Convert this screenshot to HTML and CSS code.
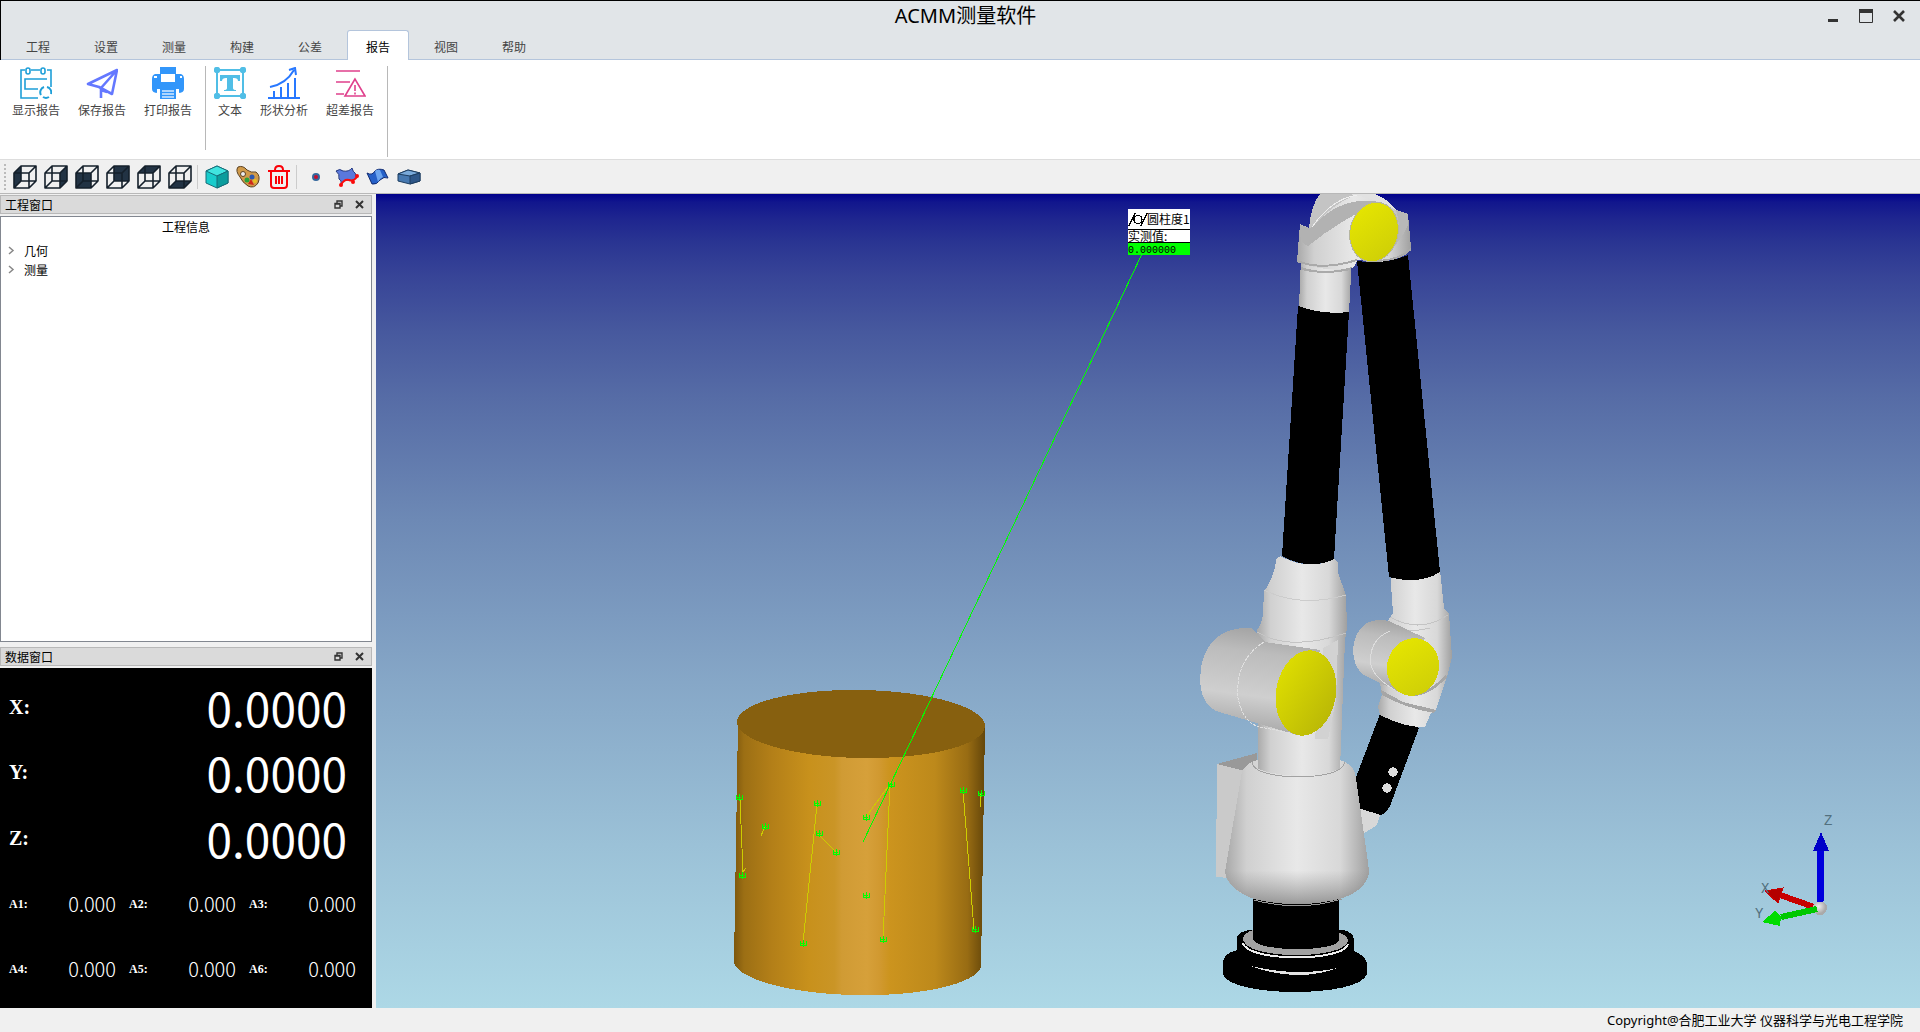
FILE: index.html
```html
<!DOCTYPE html>
<html lang="zh-CN">
<head>
<meta charset="utf-8">
<title>ACMM测量软件</title>
<link rel="stylesheet" href="styles.css">
</head>
<body>
<svg class="defs" width="0" height="0" aria-hidden="true">
  <defs>
    <g id="wire" fill="none" stroke="#15202b" stroke-width="1.6" stroke-linejoin="round">
      <path d="M1 8H16V23H1ZM8 1H23V16H8ZM1 8L8 1M16 8L23 1M16 23L23 16M1 23L8 16"/>
    </g>
    <g id="restore" fill="none" stroke="#333" stroke-width="1.4">
      <path d="M3 3V1H8V6H6M1 3.5H6V8H1ZM1 4H6"/>
    </g>
    <g id="cross" fill="none" stroke="#333" stroke-width="2"><path d="M1 1L8 8M8 1L1 8"/></g>
  </defs>
</svg>

<header class="titlebar">
  <h1 class="title">ACMM测量软件</h1>
  <div class="window-buttons">
    <button aria-label="最小化"><svg width="14" height="14"><path d="M2 11.5H12" stroke="#333" stroke-width="3"/></svg></button>
    <button aria-label="最大化"><svg width="14" height="14"><path d="M.5 1H13.500V13.500H.5Z" fill="none" stroke="#333"/><path d="M0 2H14" stroke="#333" stroke-width="4"/></svg></button>
    <button aria-label="关闭"><svg width="14" height="14"><path d="M2 2L12 12M12 2L2 12" stroke="#333" stroke-width="2.6"/></svg></button>
  </div>
  <nav class="tabs">
    <button class="tab">工程</button>
    <button class="tab">设置</button>
    <button class="tab">测量</button>
    <button class="tab">构建</button>
    <button class="tab">公差</button>
    <button class="tab active">报告</button>
    <button class="tab">视图</button>
    <button class="tab">帮助</button>
  </nav>
</header>

<section class="ribbon">
  <div class="group">
    <button class="tool"><svg width="32" height="32" viewBox="0 0 32 32" fill="none" stroke="#1e9fd8" stroke-width="1.6"><path d="M5 3H1V31H18M11 3H20M27 3H31V20M27 12H5V22H18"/><rect x="6" y="1" width="4" height="6" rx="2"/><rect x="21" y="1" width="4" height="6" rx="2"/><path d="M21 28A5.500 5.500 0 0 1 24 20M27 20A5.500 5.500 0 0 1 31 27M29 30A5.500 5.500 0 0 1 23 30" stroke-width="2"/></svg>显示报告</button>
    <button class="tool"><svg width="32" height="32" viewBox="0 0 32 32" fill="none" stroke="#6478ff" stroke-width="2.6" stroke-linejoin="round"><path d="M31 3L2 17L13 20L26 27ZM31 3L15 21V31M15 23L21 25"/></svg>保存报告</button>
    <button class="tool"><svg width="32" height="32" viewBox="0 0 32 32" fill="#3296fa"><path d="M8 0H24V7H29Q32 8 32 12V22Q32 26 26 26V22H6V26Q0 26 0 22V12Q0 8 3 7H8Z"/><path d="M9 7H23V15H9ZM2 9H5V11H2ZM28 9H30V11H28Z" fill="#fff"/><path d="M8 22H24V32H8Z"/><path d="M6 22V27M26 22V27" stroke="#fff" stroke-width="2"/><path d="M10 24H22M10 27H22M10 30H22" stroke="#d6eaff" stroke-width="1.4"/></svg>打印报告</button>
  </div>
  <div class="group">
    <button class="tool"><svg width="32" height="32" viewBox="0 0 32 32" fill="#50bee6"><path d="M3 3H29V29H3Z" fill="none" stroke="#50bee6" stroke-width="2"/><circle cx="3" cy="3" r="3.2"/><circle cx="29" cy="3" r="3.2"/><circle cx="3" cy="29" r="3.2"/><circle cx="29" cy="29" r="3.2"/><path d="M6 8H26V14H24Q24 11 20 11H19V21Q19 23 22 23V24H10V23Q13 23 13 21V11H12Q8 11 8 14H6Z"/></svg>文本</button>
    <button class="tool"><svg width="32" height="32" viewBox="0 0 32 32" fill="none" stroke="#2878ff" stroke-width="2"><path d="M0 31H32M6 30V24M13 30V20M20 30V16M27 30V11M2 20Q18 17 26 3M21 3L27 1L28 8"/></svg>形状分析</button>
    <button class="tool"><svg width="32" height="32" viewBox="0 0 32 32" fill="none" stroke="#e0408c" stroke-width="1.6"><path d="M2 4H26M2 15H16M2 27H10M21 12L11 29H31ZM21 18V24M21 25.5V27.5"/></svg>超差报告</button>
  </div>
</section>

<section class="toolbar">
  <span class="grip"></span>
  <button aria-label="左视图"><svg width="24" height="24"><path d="M1 8L8 1V16L1 23Z" fill="#223344"/><use href="#wire"/></svg></button>
  <button aria-label="右视图"><svg width="24" height="24"><path d="M16 8L23 1V16L16 23Z" fill="#223344"/><use href="#wire"/></svg></button>
  <button aria-label="前视图"><svg width="24" height="24"><path d="M1 8H16V23H1Z" fill="#223344"/><use href="#wire"/></svg></button>
  <button aria-label="后视图"><svg width="24" height="24"><path d="M8 1H23V16H8Z" fill="#223344"/><use href="#wire"/></svg></button>
  <button aria-label="俯视图"><svg width="24" height="24"><path d="M1 8L8 1H23L16 8Z" fill="#223344"/><use href="#wire"/></svg></button>
  <button aria-label="仰视图"><svg width="24" height="24"><path d="M1 23L8 16H23L16 23Z" fill="#223344"/><use href="#wire"/></svg></button>
  <span class="divider"></span>
  <button aria-label="实体"><svg width="24" height="24" stroke="#176c78" stroke-width="1"><path d="M12 1L23 6V18L12 23L1 18V6Z" fill="#18cccc"/><path d="M12 1L23 6L12 11L1 6Z" fill="#40e4e0"/><path d="M12 11L23 6V18L12 23Z" fill="#0b9d9d"/></svg></button>
  <button aria-label="颜色"><svg width="24" height="24"><path d="M2 2Q7 0 11 5Q15 8 20 7Q25 11 22 18Q18 24 12 21Q6 17 4 12Q-1 6 2 2Z" fill="#d09a4a" stroke="#5a4020"/><circle cx="7" cy="9" r="2.5" fill="#eee" stroke="#5a4020"/><circle cx="16" cy="12" r="2.5" fill="#2b57b0"/><circle cx="11" cy="15" r="2.5" fill="#28a03c"/><circle cx="19" cy="16" r="2" fill="#e8c020"/><path d="M12 19L15 14L18 20Z" fill="#d02818"/></svg></button>
  <button aria-label="删除"><svg width="24" height="24" fill="none" stroke="#fb0007" stroke-width="2"><path d="M1 6H23M8 5Q8 1 12 1Q16 1 16 5M4 6V20Q4 23 7 23H17Q20 23 20 20V6M9 11V19M12 11V19M15 11V19"/></svg></button>
  <span class="divider"></span>
  <button aria-label="点"><svg width="24" height="24"><circle cx="12" cy="12" r="3" fill="#c8102e" stroke="#35689c" stroke-width="2"/></svg></button>
  <button aria-label="曲线"><svg width="24" height="24"><path d="M1 6Q5 3 8 6Q14 7 17 3Q18 7 20 8L22 12Q18 17 14 15Q9 14 6 19Q7 15 4 14Q5 9 1 6Z" fill="#5a78dc" stroke="#23377d"/><path d="M22 12Q18 17 14 15Q9 14 6 20" fill="none" stroke="#fa0a0a" stroke-width="2"/><circle cx="22" cy="11" r="2" fill="#fa0a0a"/><circle cx="6" cy="20" r="2" fill="#fa0a0a"/><circle cx="18" cy="17" r="2" fill="#fa0a0a"/></svg></button>
  <button aria-label="曲面"><svg width="24" height="24" stroke="#102a70"><path d="M1 8Q6 11 9 6Q12 3 18 5L22 13Q18 11 14 15Q11 20 6 19Z" fill="#2560c8"/><path d="M9 6Q11 4 14 5L17 12Q14 13 12 17Z" fill="#6ba4ee" stroke="none"/></svg></button>
  <button aria-label="方块"><svg width="24" height="24" stroke="#1d3d60"><path d="M1 9L11 5L23 8V16L13 19L1 16Z" fill="#4678b0"/><path d="M1 9L11 5L23 8L13 11Z" fill="#78a8d8"/><path d="M13 11L23 8V16L13 19Z" fill="#2e5688"/></svg></button>
</section>

<main class="workspace">
  <aside class="side">
    <div class="dock-title"><h2>工程窗口</h2>
      <button aria-label="浮动"><svg width="9" height="9"><use href="#restore"/></svg></button>
      <button aria-label="关闭"><svg width="9" height="9"><use href="#cross"/></svg></button>
    </div>
    <div class="tree">
      <h3>工程信息</h3>
      <ul>
        <li><svg width="7" height="9"><path d="M1 1L5 4.500L1 8" fill="none" stroke="#888" stroke-width="1.5"/></svg>几何</li>
        <li><svg width="7" height="9"><path d="M1 1L5 4.500L1 8" fill="none" stroke="#888" stroke-width="1.5"/></svg>测量</li>
      </ul>
    </div>
    <div class="dock-title lower"><h2>数据窗口</h2>
      <button aria-label="浮动"><svg width="9" height="9"><use href="#restore"/></svg></button>
      <button aria-label="关闭"><svg width="9" height="9"><use href="#cross"/></svg></button>
    </div>
    <div class="readout">
      <div class="axis"><span>X:</span><output>0.0000</output></div>
      <div class="axis"><span>Y:</span><output>0.0000</output></div>
      <div class="axis"><span>Z:</span><output>0.0000</output></div>
      <div class="angle"><span>A1:</span><output>0.000</output></div>
      <div class="angle"><span>A2:</span><output>0.000</output></div>
      <div class="angle"><span>A3:</span><output>0.000</output></div>
      <div class="angle"><span>A4:</span><output>0.000</output></div>
      <div class="angle"><span>A5:</span><output>0.000</output></div>
      <div class="angle"><span>A6:</span><output>0.000</output></div>
    </div>
  </aside>

  <section class="viewport">
    <svg class="scene" viewBox="376 194 1544 814" preserveAspectRatio="xMidYMid slice">
      <defs>
        <linearGradient id="gold"><stop offset="0" stop-color="#7d570d"/><stop offset=".04" stop-color="#9c6f14"/><stop offset=".15" stop-color="#b37f18"/><stop offset=".3" stop-color="#c8911c"/><stop offset=".4" stop-color="#ca9526"/><stop offset=".43" stop-color="#d09b34"/><stop offset=".53" stop-color="#d6a03a"/><stop offset=".58" stop-color="#d19930"/><stop offset=".62" stop-color="#cc941e"/><stop offset=".8" stop-color="#bd891b"/><stop offset=".93" stop-color="#986c13"/><stop offset="1" stop-color="#64460a"/></linearGradient>
        <linearGradient id="shell"><stop offset="0" stop-color="#a8a8a8"/><stop offset=".15" stop-color="#d0d0d0"/><stop offset=".5" stop-color="#e8e8e8"/><stop offset=".8" stop-color="#d8d8d8"/><stop offset="1" stop-color="#a0a0a0"/></linearGradient>
        <linearGradient id="barrel" x1=".3" y1="0" x2=".15" y2="1"><stop offset="0" stop-color="#a6a6a6"/><stop offset=".2" stop-color="#bcbcbc"/><stop offset=".6" stop-color="#cfcfcf"/><stop offset="1" stop-color="#a0a0a0"/></linearGradient>
        <linearGradient id="cap" x2="1" y2=".6"><stop offset="0" stop-color="#e2e200"/><stop offset="1" stop-color="#bcba06"/></linearGradient>
        <linearGradient id="capLight" x2="1" y2="1"><stop offset="0" stop-color="#e8e800"/><stop offset="1" stop-color="#cccc08"/></linearGradient>
        <linearGradient id="under" x2="0" y2="1"><stop offset=".6" stop-color="#888" stop-opacity="0"/><stop offset="1" stop-color="#777" stop-opacity=".7"/></linearGradient>
        <radialGradient id="ball" cx=".4" cy=".4"><stop offset="0" stop-color="#eee"/><stop offset="1" stop-color="#aaa"/></radialGradient>
        <g id="mark" fill="none" stroke="#0f0"><path d="M-3 -2V2H3V-2M-2 0H2M0 -3V4"/></g>
      </defs>

      <!-- workpiece -->
      <path d="M738 722L734 963A124 33 1 0 0 981 967L985 726Z" fill="url(#gold)"/>
      <ellipse cx="861" cy="724" rx="124" ry="34" transform="rotate(1 861 724)" fill="#87600f"/>
      <path d="M740 800L743 872M765 826L761 836M817 804L803 943M818 834L836 852M866 817L890 784L883 939M963 790L974 930M980 793V807M743 872L746 868" stroke="#cdcd00" fill="none"/>
      <path d="M1142 254L863 842" stroke="#0f0"/>
      <use href="#mark" x="739" y="797"/><use href="#mark" x="742" y="875"/><use href="#mark" x="765" y="826"/><use href="#mark" x="817" y="803"/><use href="#mark" x="819" y="833"/><use href="#mark" x="836" y="852"/><use href="#mark" x="866" y="817"/><use href="#mark" x="891" y="784"/><use href="#mark" x="866" y="895"/><use href="#mark" x="803" y="943"/><use href="#mark" x="883" y="939"/><use href="#mark" x="963" y="790"/><use href="#mark" x="975" y="929"/><use href="#mark" x="981" y="793"/>

      <!-- elbow at the top of the arm -->
      <path d="M1301 258H1352L1349 312Q1325 316 1299 307Z" fill="url(#shell)"/>
      <path d="M1300 224L1309 228Q1311 205 1320 194H1375Q1388 199 1396 210L1408 214L1411 248Q1409 258 1380 262L1357 260Q1355 268 1351 268Q1325 273 1297 261Z" fill="url(#shell)"/>
      <path d="M1300 224L1309 228Q1311 205 1320 194H1358Q1330 205 1315 226Q1340 200 1380 202Q1340 220 1308 246Q1301 244 1300 234Z" fill="#c4c4c4"/>
      <path d="M1313 227Q1340 195 1380 202Q1340 220 1308 246Q1301 244 1300 234V225L1309 228Z" fill="#b2b2b2"/>
      <path d="M1312 227Q1335 195 1362 195" fill="none" stroke="#eee"/>
      <path d="M1350 194H1375Q1388 199 1396 210Q1378 199 1350 194Z" fill="#e2e2e2"/>
      <path d="M1396 210L1408 214V225Q1400 242 1388 253Q1404 235 1396 210Z" fill="#b8b8b8"/>
      <path d="M1297 261Q1322 271 1357 260M1364 260Q1395 264 1411 249" fill="none" stroke="#aaa" stroke-width="2"/>
      <path d="M1301 267Q1325 275 1352 267L1351 270Q1325 276 1301 270Z" fill="#aaa"/>
      <ellipse cx="1374" cy="232" rx="24" ry="30" transform="rotate(14 1374 232)" fill="url(#capLight)" stroke="#b5b5a0"/>
      <path d="M1298 306Q1322 315 1349 312L1334 559Q1310 571 1282 556Z"/>

      <!-- forearm joint -->
      <path d="M1360 809L1381 812L1377 825L1363 834Z" fill="#d8d8d8"/>
      <path d="M1380 714L1419 728L1390 806Q1386 813 1381 815L1358 808L1355 780Z"/>
      <circle cx="1393" cy="772" r="4.7" fill="#ddd"/><circle cx="1387" cy="788" r="4.7" fill="#ddd"/>
      <path d="M1390 570H1440L1444 608L1449 614L1452 657L1447 677L1436 710L1431 713L1425 727Q1405 728 1380 715L1378 707L1382 695L1380 683L1385 625L1393 613Z" fill="url(#shell)"/>
      <path d="M1357 261Q1385 265 1408 255L1440 572Q1420 585 1389 577Z"/>
      <path d="M1390 617Q1420 634 1448 615M1390 630Q1410 633 1430 628" fill="none" stroke="#c4c4c4"/>
      <path d="M1381 690L1403 702L1436 710L1434 713Q1405 708 1382 695ZM1447 677Q1430 696 1412 696Q1432 690 1446 675Z" fill="#a6a6a6"/>
      <path d="M1389 621Q1358 615 1353 648Q1353 672 1370 678L1397 691L1425 638Z" fill="url(#barrel)"/>
      <path d="M1390 631Q1368 640 1371 665Q1374 678 1395 690" fill="none" stroke="#ddd"/>
      <ellipse cx="1413" cy="667" rx="26" ry="29" transform="rotate(15 1413 667)" fill="url(#capLight)"/>

      <!-- base, rear housing -->
      <path d="M1217 764L1257 753L1258 880L1216 877Z" fill="#cacaca"/><path d="M1217 764L1257 753V774Z" fill="#999"/>
      <path d="M1253 898H1339V948H1253Z"/>
      <path d="M1242 771Q1248 762 1258 760H1340Q1354 764 1356 778L1369 870Q1369 888 1343 898Q1300 910 1254 899Q1227 889 1225 872Z" fill="url(#shell)"/>
      <path d="M1225 870Q1227 889 1254 899Q1300 910 1343 898Q1369 888 1369 870L1362 820H1232Z" fill="url(#under)"/>

      <!-- shoulder -->
      <path d="M1276 560Q1280 555 1282 557Q1310 571 1334 559L1338 562V573L1346 595L1347 628L1345 640L1340 769Q1299 783 1258 769V733L1257 630Q1263 622 1263 612L1264 592Q1275 575 1276 560Z" fill="url(#shell)"/>
      <path d="M1252 762Q1254 776 1299 777Q1342 776 1345 762" fill="none" stroke="#a2a2a2"/>
      <path d="M1264 590Q1300 608 1346 595" fill="none" stroke="#ccc"/>
      <path d="M1257 632Q1290 652 1346 633" fill="none" stroke="#c4c4c4"/>
      <path d="M1323 648L1338 640L1336 700L1328 739H1315Z" fill="#d2d2d2"/>
      <path d="M1252 628Q1212 626 1202 662Q1195 700 1216 711L1297 735L1320 650L1265 642Z" fill="url(#barrel)"/>
      <path d="M1264 642Q1235 660 1238 698Q1243 723 1260 727L1290 733" fill="none" stroke="#e0e0e0" stroke-dasharray="3 1"/>
      <ellipse cx="1306" cy="693" rx="30" ry="43" transform="rotate(10 1306 693)" fill="url(#cap)"/>

      <!-- base, foot -->
      <path d="M1254 900Q1299 912 1342 899" fill="none" stroke="#999"/>
      <path d="M1223 961Q1225 953 1237 950V937Q1240 931 1250 930H1343Q1353 932 1354 939V951Q1367 957 1367 964V974C1360 998 1230 998 1223 974Z"/>
      <path d="M1253 930Q1243 933 1243 940C1247 960 1344 960 1348 941Q1348 935 1339 933Z" fill="#a2a2a2"/>
      <path d="M1243 943C1247 962 1344 962 1348 944" fill="none" stroke="#eee" stroke-width="2"/>
      <path d="M1253 902Q1296 912 1339 901V941C1332 952 1260 952 1253 940Z"/>
      <path d="M1251 966Q1296 977 1338 968Q1296 983 1251 966Z" fill="#e4e4e4"/>

      <!-- callout -->
      <path d="M1128 209H1190V255H1128Z" fill="#fff"/><path d="M1128 243H1190V255H1128Z" fill="#0f0"/>
      <path d="M1128 229.500H1190M1128 242.500H1190" stroke="#000"/>
      <path d="M1129 226L1135 213M1141 226L1147 213" stroke="#000" stroke-width="1.4"/><circle cx="1138" cy="219.500" r="4" fill="none" stroke="#000" stroke-width="1.4"/>
      <text class="callout" x="1147" y="224">圆柱度1</text>
      <text class="callout" x="1128" y="241">实测值:</text>
      <text class="callout value" x="1128" y="253">0.000000</text>

      <!-- orientation triad -->
      <path d="M1814 907L1780 895" stroke="#c80000" stroke-width="6"/><path d="M1765 891L1783 888L1778 903Z" fill="#b40000" stroke="#c80000"/>
      <circle cx="1820" cy="908" r="7" fill="url(#ball)"/>
      <path d="M1817 909L1781 917" stroke="#00c800" stroke-width="6"/><path d="M1762 922L1775 911L1781 916L1780 926Z" fill="#00dc00"/>
      <path d="M1820 902L1821 850" stroke="#0000dc" stroke-width="7"/><path d="M1821 832L1829 851H1813Z" fill="#0000c8"/>
      <text class="axis-name" x="1824" y="825">Z</text><text class="axis-name" x="1761" y="893">X</text><text class="axis-name" x="1755" y="918">Y</text>
    </svg>
  </section>
</main>
<footer class="status">Copyright@合肥工业大学 仪器科学与光电工程学院</footer>
</body>
</html>
```
FILE: styles.css
```css
* { box-sizing: border-box; }
body {
  margin: 0;
  min-height: 100vh;
  display: flex;
  flex-direction: column;
  background: #f0f0f0;
  color: #000;
  font: 12px/16px "Noto Sans CJK SC", sans-serif;
}
h1, h2, h3 { margin: 0; font-size: inherit; font-weight: 400; }
button { border: 0; padding: 0; background: none; font: inherit; color: inherit; }
svg { display: block; }
.defs { position: absolute; }

.titlebar {
  display: grid;
  grid-template-columns: 1fr auto 1fr;
  grid-template-rows: 29px 30px;
  height: 60px;
  background: #e1e5e8;
  border-top: 1px solid #000;
  border-left: 1px solid #000;
}
.title { grid-column: 2; padding-left: 10px; font: 20px/29px "Noto Sans", "Noto Sans CJK SC", sans-serif; }
.window-buttons { grid-column: 3; display: flex; justify-content: flex-end; align-items: center; gap: 19px; padding-right: 14px; }
.tabs { grid-column: 1 / -1; display: flex; gap: 6px; padding-left: 6px; box-shadow: inset 0 -1px #b4c5dc; }
.tab { width: 62px; height: 30px; padding-top: 2px; color: #444; border: 1px solid transparent; border-bottom: 0; }
.tab.active { background: #fff; border-color: #b4c5dc; border-radius: 3px 3px 0 0; color: #000; }

.ribbon { display: flex; height: 100px; background: #fff; border-bottom: 1px solid #ddd; padding: 6px 0 2px 2px; }
.group { display: flex; gap: 18px; padding: 1px 13px 0 12px; border-right: 1px solid #b8b8b8; }
.group:first-child { height: 84px; padding-left: 10px; }
.tool { display: flex; flex-direction: column; align-items: center; gap: 3px; height: 56px; color: #444; white-space: nowrap; }
.tool svg { flex: none; margin: 0 -4px; }

.toolbar { display: flex; align-items: center; height: 34px; padding-left: 4px; border-bottom: 1px solid #b8b8b8; }
.toolbar button { width: 31px; height: 30px; display: grid; place-items: center; }
.grip { width: 2px; height: 26px; margin-right: 3px; background: repeating-linear-gradient(#bbb 0 2px, transparent 2px 4px); }
.divider { width: 1px; height: 24px; margin: 0 3px 0 2px; background: #ccc; }

.workspace { flex: 1; display: grid; grid-template-columns: 372px minmax(0, 1fr); column-gap: 4px; }
.side { display: grid; grid-template-rows: auto 426fr auto 340fr; row-gap: 2px; padding-top: 1px; }
.dock-title { display: flex; align-items: center; gap: 12px; height: 19px; padding: 0 7px 0 4px; background: #dadada; border: 1px solid #b8b8b8; }
.dock-title h2 { margin-right: auto; }
.lower { margin-top: 3px; }
.tree { background: #fff; border: 1px solid #828790; }
.tree h3 { padding-top: 2px; text-align: center; }
.tree ul { margin: 6px 0 0; padding: 0 0 0 7px; list-style: none; }
.tree li { display: flex; align-items: center; gap: 9px; height: 19px; }

.readout {
  display: grid;
  grid-template-columns: repeat(3, 1fr);
  grid-auto-rows: 1fr;
  padding: 6px 3px 6px 9px;
  background: #000;
  color: #fff;
  font: bold 12px/16px "Liberation Serif", serif;
}
.readout output { font-family: "Noto Sans CJK SC", sans-serif; font-weight: 400; }
.axis, .angle { display: flex; align-items: center; justify-content: space-between; }
.axis { grid-column: 1 / -1; padding-right: 22px; font-size: 20px; }
.axis output { font-size: 46px; line-height: 46px; }
.angle { padding-right: 13px; }
.angle output { font-size: 20px; line-height: 20px; font-weight: 300; }

.viewport {
  display: flex;
  min-height: 0;
  background: linear-gradient(#00008b, #11168d 1%, #1e258f 3%, #2a3592 6%, #374497 10%, #47599e 17%, #566ca6 25%, #6d89b5 40%, #86a7c7 60%, #9bc1d7 80%, #add8e6);
}
.scene { flex: 1; width: 100%; height: 100%; shape-rendering: crispEdges; }
.callout { font: 12px "Noto Sans CJK SC", sans-serif; }
.value { font: 10px "Liberation Mono", monospace; }
.axis-name { font: 14px "Liberation Mono", monospace; fill: #52707e; }

.status { height: 24px; padding-right: 17px; text-align: right; font: 13px/24px "Noto Sans", "Noto Sans CJK SC", sans-serif; }
```
